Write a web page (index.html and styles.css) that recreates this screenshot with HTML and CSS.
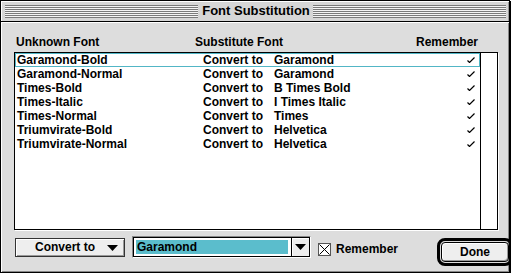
FILE: index.html
```html
<!DOCTYPE html>
<html>
<head>
<meta charset="utf-8">
<link rel="stylesheet" href="styles.css">
</head>
<body>
<div class="window">
  <div class="titlebar">
    <div class="stripes"></div>
    <div class="title">Font Substitution</div>
    <div class="stripes"></div>
  </div>
  <div class="content">
    <div class="headers">
      <span class="h-unknown">Unknown Font</span>
      <span class="h-sub">Substitute Font</span>
      <span class="h-rem">Remember</span>
    </div>
    <div class="listbox">
      <div class="rows">
        <div class="row selected"><span>Garamond-Bold</span><span>Convert to</span><span>Garamond</span><svg class="check" width="8" height="6" viewBox="0 0 8 6"><path d="M0.5 3.5 L2.5 5.5 L7.5 0.5" fill="none" stroke="#000" stroke-width="1.2"/></svg></div>
        <div class="row"><span>Garamond-Normal</span><span>Convert to</span><span>Garamond</span><svg class="check" width="8" height="6" viewBox="0 0 8 6"><path d="M0.5 3.5 L2.5 5.5 L7.5 0.5" fill="none" stroke="#000" stroke-width="1.2"/></svg></div>
        <div class="row"><span>Times-Bold</span><span>Convert to</span><span>B Times Bold</span><svg class="check" width="8" height="6" viewBox="0 0 8 6"><path d="M0.5 3.5 L2.5 5.5 L7.5 0.5" fill="none" stroke="#000" stroke-width="1.2"/></svg></div>
        <div class="row"><span>Times-Italic</span><span>Convert to</span><span>I Times Italic</span><svg class="check" width="8" height="6" viewBox="0 0 8 6"><path d="M0.5 3.5 L2.5 5.5 L7.5 0.5" fill="none" stroke="#000" stroke-width="1.2"/></svg></div>
        <div class="row"><span>Times-Normal</span><span>Convert to</span><span>Times</span><svg class="check" width="8" height="6" viewBox="0 0 8 6"><path d="M0.5 3.5 L2.5 5.5 L7.5 0.5" fill="none" stroke="#000" stroke-width="1.2"/></svg></div>
        <div class="row"><span>Triumvirate-Bold</span><span>Convert to</span><span>Helvetica</span><svg class="check" width="8" height="6" viewBox="0 0 8 6"><path d="M0.5 3.5 L2.5 5.5 L7.5 0.5" fill="none" stroke="#000" stroke-width="1.2"/></svg></div>
        <div class="row"><span>Triumvirate-Normal</span><span>Convert to</span><span>Helvetica</span><svg class="check" width="8" height="6" viewBox="0 0 8 6"><path d="M0.5 3.5 L2.5 5.5 L7.5 0.5" fill="none" stroke="#000" stroke-width="1.2"/></svg></div>
      </div>
      <div class="scrollbar"></div>
    </div>
    <div class="controls">
      <div class="popup">
        <span class="popup-label">Convert to</span>
        <svg class="tri" width="11" height="6" viewBox="0 0 11 6"><path d="M0 0 H11 L5.5 6 Z" fill="#000"/></svg>
      </div>
      <div class="combo">
        <div class="combo-field"><span>Garamond</span></div>
        <div class="combo-btn"><svg width="11" height="6" viewBox="0 0 11 6"><path d="M0 0 H11 L5.5 6 Z" fill="#000"/></svg></div>
      </div>
      <div class="checkbox"><svg width="11" height="11" viewBox="0 0 11 11"><path d="M0.5 0.5 L10.5 10.5 M10.5 0.5 L0.5 10.5" stroke="#000" stroke-width="1"/></svg></div>
      <span class="cb-label">Remember</span>
      <div class="done-ring"><div class="done">Done</div></div>
    </div>
  </div>
</div>
</body>
</html>
```

FILE: styles.css
```css
html, body {
  margin: 0;
  padding: 0;
  background: #fff;
}
body {
  font-family: "Liberation Sans", Arial, sans-serif;
  font-weight: bold;
  font-size: 12px;
  color: #000;
}
.window {
  box-sizing: border-box;
  width: 510px;
  height: 273px;
  border: 1px solid #000;
  box-shadow: 1px 1px 0 #000;
  background: #dddddd;
  display: flex;
  flex-direction: column;
}
.titlebar {
  height: 20px;
  border-bottom: 1px solid #000;
  background: #d6d6d6;
  box-shadow: inset 1px 1px 0 #fff, inset -1px 0 0 #999;
  display: flex;
  align-items: center;
  padding: 0 3px 0 4px;
}
.stripes {
  flex: 1;
  height: 13px;
  margin-top: 1px;
  background: repeating-linear-gradient(to bottom, #7a7a7a 0 1px, #f4f4f4 1px 2px);
}
.title {
  flex: none;
  padding: 0 3px 0 4px;
  font-size: 13px;
  line-height: 20px;
}
.content {
  flex: 1;
  padding: 13px 0 0 13px;
  box-shadow: inset 1px 1px 0 #fff, inset -1px -1px 0 #888;
  display: flex;
  flex-direction: column;
}
.headers {
  display: flex;
  height: 14px;
  line-height: 14px;
  padding-left: 2px;
}
.h-unknown { width: 179px; }
.h-sub { width: 221px; }
.listbox {
  margin-top: 3px;
  width: 484px;
  height: 178px;
  box-sizing: border-box;
  border: 1px solid #000;
  background: #fff;
  display: flex;
  box-shadow: 1px 1px 0 #fff;
}
.rows {
  width: 465px;
  display: flex;
  flex-direction: column;
}
.row {
  height: 14px;
  line-height: 14px;
  display: grid;
  grid-template-columns: 186px 71px 1fr 8px;
  padding: 0 5px 0 2px;
  align-items: center;
}
.row.selected {
  box-shadow: inset 0 0 0 1px #52b6c6;
}
.check {
  display: block;
}
.scrollbar {
  width: 16px;
  border-left: 1px solid #000;
  background: #fff;
}
.controls {
  display: flex;
  align-items: flex-start;
  margin-top: 6px;
}
.popup {
  margin: 2px 0 0 1px;
  width: 110px;
  height: 19px;
  box-sizing: border-box;
  border: 1px solid #333;
  background: #eeeeee;
  box-shadow: inset 1px 1px 0 #fff, inset -1px -1px 0 #999;
  display: flex;
  align-items: center;
  padding: 0 6px 0 19px;
  line-height: 17px;
}
.popup-label { flex: 1; }
.tri { display: block; }
.combo {
  margin-left: 7px;
  width: 179px;
  height: 22px;
  box-sizing: border-box;
  border: 1px solid #888;
  border-right-color: #fff;
  border-bottom-color: #fff;
  display: flex;
}
.combo-field {
  flex: 1;
  border: 1px solid #000;
  border-right: none;
  background: #fff;
  padding: 2px;
  display: flex;
}
.combo-field span {
  flex: 1;
  background: #5bbdcc;
  line-height: 14px;
  padding-left: 1px;
  margin-right: 1px;
}
.combo-btn {
  width: 17px;
  border: 1px solid #000;
  background: #eeeeee;
  box-shadow: inset 1px 1px 0 #fff;
  display: flex;
  align-items: center;
  justify-content: center;
}
.checkbox {
  margin: 7px 0 0 7px;
  width: 13px;
  height: 13px;
  box-sizing: border-box;
  border: 1px solid #555;
  background: #fff;
  display: flex;
}
.checkbox svg { display: block; }
.cb-label {
  margin: 6px 0 0 5px;
  line-height: 14px;
}
.done-ring {
  margin: 2px -4px 0 auto;
  width: 76px;
  height: 28px;
  box-sizing: border-box;
  border: 3px solid #000;
  border-radius: 8px;
  padding: 1px;
}
.done {
  height: 100%;
  box-sizing: border-box;
  border: 1px solid #000;
  border-radius: 4px;
  background: #eeeeee;
  box-shadow: inset 1px 1px 0 #fff, inset -1px -1px 0 #999;
  text-align: center;
  line-height: 18px;
}
```
